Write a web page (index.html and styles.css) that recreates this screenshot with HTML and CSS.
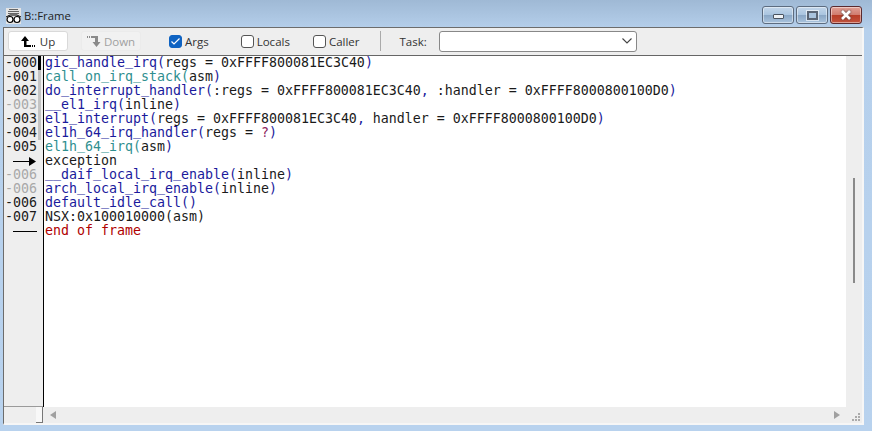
FILE: index.html
```html
<!DOCTYPE html>
<html lang="en">
<head>
<meta charset="utf-8">
<title>B::Frame</title>
<link rel="stylesheet" href="styles.css">
</head>
<body>
<div class="window">
  <header class="titlebar">
    <svg class="appicon" width="17" height="17" viewBox="0 0 17 17">
      <rect x="1" y="0" width="15" height="16" fill="#e4e4e4"/>
      <path d="M4 1.500h9M3 3.500h11M3 5.500h11" stroke="#666" stroke-width="1"/>
      <path d="M1 9l4-2h7l4 2" fill="none" stroke="#000" stroke-width="1"/>
      <circle cx="5" cy="11.500" r="3" fill="#fff" stroke="#000" stroke-width="1.200"/>
      <circle cx="12" cy="11.500" r="3" fill="#fff" stroke="#000" stroke-width="1.200"/>
    </svg>
    <span class="title">B::Frame</span>
    <div class="caption">
      <button class="cap"><span class="min-g"></span></button>
      <button class="cap"><span class="max-g"></span></button>
      <button class="cap close"><svg width="12" height="10" viewBox="0 0 12 10"><path d="M2 1l8 8M10 1l-8 8" stroke="#fff" stroke-width="2.600" fill="none"/></svg></button>
    </div>
  </header>
  <div class="client">
    <div class="toolbar">
      <button class="tbtn up">
        <svg width="14" height="11" viewBox="0 0 14 11"><path d="M4 0L8 5H5.500V9H10V11H3V5H0Z" fill="#000"/><path d="M11 9h1v2h-1zM13 9h1v2h-1z" fill="#000"/></svg>
        <span>Up</span>
      </button>
      <button class="tbtn down">
        <svg width="14" height="11" viewBox="0 0 14 11"><path d="M0 0h1v2H0zM2 0h1v2H2zM4 0h7v2H4zM8 2h3v4h2.500L9.500 11L5.500 6H8Z" fill="#8a8a8a"/></svg>
        <span>Down</span>
      </button>
      <label class="chk args"><span class="box on"><svg width="11" height="9" viewBox="0 0 11 9"><path d="M1.500 4.500L4 7L9.500 1.500" fill="none" stroke="#fff" stroke-width="1.200"/></svg></span>Args</label>
      <label class="chk locals"><span class="box"></span>Locals</label>
      <label class="chk caller"><span class="box"></span>Caller</label>
      <span class="sep"></span>
      <span class="task">Task:</span>
      <div class="combo"><svg width="10" height="6" viewBox="0 0 10 6"><path d="M.500 .500L5 5L9.500 .500" fill="none" stroke="#444" stroke-width="1.100"/></svg></div>
    </div>
    <div class="main">
      <div class="gutter">
        <div class="ln">-000</div>
        <div class="ln">-001</div>
        <div class="ln">-002</div>
        <div class="ln dim">-003</div>
        <div class="ln">-003</div>
        <div class="ln">-004</div>
        <div class="ln">-005</div>
        <div class="ln arrow"><svg width="24" height="9" viewBox="0 0 24 9"><path d="M0 4h17v1H0z" fill="#000"/><path d="M16 0L23 4.500L16 9Z" fill="#000"/></svg></div>
        <div class="ln dim">-006</div>
        <div class="ln dim">-006</div>
        <div class="ln">-006</div>
        <div class="ln">-007</div>
        <div class="ln arrow"><span class="dash"></span></div>
      </div>
      <div class="marker"><span class="m1"></span><span class="m2"></span></div>
      <div class="code">
        <div class="row"><b>gic<u>_</u>handle<u>_</u>irq(</b>regs = 0xFFFF800081EC3C40<b>)</b></div>
        <div class="row"><i>call<u>_</u>on<u>_</u>irq<u>_</u>stack(</i>asm<i class="b">)</i></div>
        <div class="row"><b>do<u>_</u>interrupt<u>_</u>handler(</b>:regs = 0xFFFF800081EC3C40<b>,</b> :handler = 0xFFFF8000800100D0<b>)</b></div>
        <div class="row"><b><u>__</u>el1<u>_</u>irq(</b>inline<b>)</b></div>
        <div class="row"><b>el1<u>_</u>interrupt(</b>regs = 0xFFFF800081EC3C40<b>,</b> handler = 0xFFFF8000800100D0<b>)</b></div>
        <div class="row"><b>el1h<u>_</u>64<u>_</u>irq<u>_</u>handler(</b>regs = <em>?</em><b>)</b></div>
        <div class="row"><i>el1h<u>_</u>64<u>_</u>irq(</i>asm<i class="b">)</i></div>
        <div class="row">exception</div>
        <div class="row"><b><u>__</u>daif<u>_</u>local<u>_</u>irq<u>_</u>enable(</b>inline<b>)</b></div>
        <div class="row"><b>arch<u>_</u>local<u>_</u>irq<u>_</u>enable(</b>inline<b>)</b></div>
        <div class="row"><b>default<u>_</u>idle<u>_</u>call()</b></div>
        <div class="row">NSX:0x100010000(asm)</div>
        <div class="row end">end of frame</div>
      </div>
      <div class="vbar"><span class="thumb"></span></div>
    </div>
    <div class="bottom">
      <div class="corner"><span class="tab"></span></div>
      <div class="hbar">
        <svg width="6" height="8" viewBox="0 0 6 8"><path d="M6 0V8L0 4Z" fill="#a0a0a0"/></svg>
        <svg width="6" height="8" viewBox="0 0 6 8"><path d="M0 0V8L6 4Z" fill="#a0a0a0"/></svg>
      </div>
      <div class="grip"><svg width="9" height="8" viewBox="0 0 9 8"><path d="M6 0h2v2H6zM3 3h2v2H3zM6 3h2v2H6zM0 6h2v2H0zM3 6h2v2H3zM6 6h2v2H6z" fill="#aaa"/></svg></div>
    </div>
  </div>
</div>
</body>
</html>
```
FILE: styles.css
```css
* { box-sizing: border-box; }
html, body { margin: 0; height: 100%; }
body { width: 872px; height: 431px; overflow: hidden; font-family: "Open Sans", sans-serif; }
button { font: inherit; padding: 0; }
.window { height: 431px; display: flex; flex-direction: column; background: linear-gradient(180deg, #9fb9d5 0, #b6d0ec 30px, #b8d2ee 100%); padding: 0 8px 6px 3px; }
.titlebar { height: 27px; flex: none; display: flex; align-items: flex-start; }
.appicon { margin: 8px 0 0 2px; flex: none; }
.title { font-size: 11.300px; margin: 8px 0 0 2px; color: #222; line-height: 16px; }
.caption { margin: 6px 2px 0 auto; display: flex; gap: 2px; }
.cap { width: 32px; height: 18px; border: 1px solid #5d6c80; border-radius: 3px; background: linear-gradient(180deg, #c3d6ea 0, #aac5e0 48%, #8aa7c6 52%, #a9c3dd 100%); display: flex; align-items: center; justify-content: center; box-shadow: inset 0 0 0 1px rgba(255,255,255,.45); }
.cap.close { background: linear-gradient(180deg, #e2a096 0, #d07d6f 48%, #b83d27 52%, #c3533d 100%); border-color: #5a2a2f; }
.cap.close svg { filter: drop-shadow(0 0 1px #444); }
.min-g { width: 11px; height: 5px; margin-top: 3px; background: #eef2f6; border: 1px solid #4a5360; border-radius: 1px; }
.max-g { width: 11px; height: 9px; background: #a9c3dd; border: 2px solid #5a6574; outline: 1px solid rgba(255,255,255,.6); }
.client { flex: 1; display: flex; flex-direction: column; background: #eeeeee; border-top: 1px solid #6c6c6c; border-left: 1px solid #6c6c6c; border-right: 2px solid #f6f6f6; border-bottom: 2px solid #f6f6f6; min-height: 0; }
.toolbar { height: 28px; flex: none; display: flex; align-items: center; border-bottom: 1px solid #666; font-size: 11.500px; color: #333; padding: 0 0 1px 4px; }
.tbtn { width: 60px; height: 20px; border: 1px solid #d9d9d9; border-radius: 3px; background: #fff; display: flex; align-items: center; justify-content: center; gap: 3px; color: #333; }
.tbtn.up { gap: 5px; }
.tbtn.down { margin-left: 13px; background: #f1f1f1; border-color: #ebebeb; color: #a0a0a0; }
.chk { display: flex; align-items: center; gap: 3px; }
.box { width: 13px; height: 13px; border: 1px solid #555; border-radius: 3px; background: #fff; display: flex; align-items: center; justify-content: center; }
.box.on { background: #0f63c2; border-color: #0f63c2; }
.args { margin-left: 28px; }
.locals { margin-left: 32px; }
.caller { margin-left: 23px; }
.sep { width: 1px; height: 20px; background: #aaa; margin-left: 20px; }
.task { margin-left: 19px; }
.combo { width: 198px; height: 21px; margin-left: 12px; background: #fff; border: 1px solid #888; border-radius: 3px; display: flex; align-items: center; justify-content: flex-end; padding-right: 4px; }
.main { flex: 1; display: flex; min-height: 0; font-family: "DejaVu Sans Mono", monospace; font-size: 13.290px; line-height: 14px; color: #1a1a1a; }
.gutter { width: 34px; flex: none; background: #eeeeee; border-bottom: 1px solid #9a9a9a; padding-right: 1px; }
.ln { height: 14px; text-align: right; white-space: pre; }
.dim { color: #a8a8a8; }
.arrow { display: flex; align-items: center; justify-content: flex-end; }
.dash { width: 24px; height: 1px; background: #000; }
.marker { width: 5px; flex: none; display: flex; flex-direction: column; background: #eeeeee; border-bottom: 1px solid #9a9a9a; }
.marker .m1 { height: 14px; width: 3px; background: #000; }
.marker .m2 { height: 70px; width: 3px; background: #c4c4c4; }
.code { flex: 1; background: #fff; border-left: 1px solid #000; padding-left: 1px; }
.row { height: 14px; white-space: pre; }
.code u { text-decoration: none; font-family: "Liberation Mono", monospace; font-size: 13.330px; line-height: 0; }
.code b { font-weight: normal; color: #1a1a9c; }
.code i { font-style: normal; color: #2f8f8f; }
.code i.b { color: #1a1a9c; }
.code em { font-style: normal; color: #8c1c5c; }
.code .end { color: #b00000; }
.vbar { width: 16px; flex: none; background: #eeeeee; position: relative; }
.thumb { position: absolute; left: 7px; top: 122px; width: 2px; height: 105px; background: #8a8a8a; }
.bottom { height: 16px; flex: none; display: flex; }
.corner { width: 39px; flex: none; display: flex; justify-content: flex-end; background: #eee; }
.tab { width: 7px; height: 16px; background: #f8f8f8; border-right: 1px solid #777; border-bottom: 1px solid #777; }
.hbar { flex: 1; display: flex; justify-content: space-between; align-items: center; padding: 0 6px 0 7px; }
.grip { width: 16px; display: flex; align-items: flex-end; justify-content: flex-end; padding: 0 1px 2px 0; }
```
